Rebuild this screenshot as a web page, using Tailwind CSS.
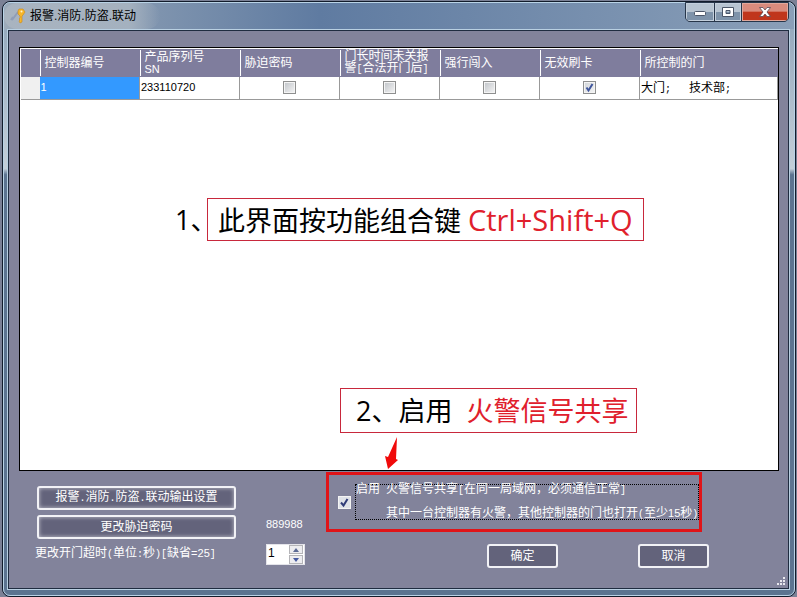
<!DOCTYPE html>
<html lang="zh-CN">
  <head>
    <meta charset="UTF-8" />
    <meta name="viewport" content="width=device-width, initial-scale=1.0" />
    <title>报警.消防.防盗.联动</title>
    <script src="https://cdn.jsdelivr.net/npm/@tailwindcss/browser@4"></script>
  </head>
  <body class="h-screen overflow-hidden bg-[#7b8196] pt-px pr-px pl-[2px] text-xs text-white font-['Liberation_Sans','Noto_Sans_CJK_SC',sans-serif]">
    <div class="h-full rounded-lg border border-[#121c2b] bg-[#5d7592]">
      <div class="flex h-full flex-col rounded-[7px] border border-[#b9d3e6] bg-linear-to-b from-[#8fa4b9] via-[#c3ced8] via-28% to-[#5c7490] to-29% pr-1 pb-[5px] pl-[3px]">
        <!-- Title bar -->
        <header class="-mr-1 -ml-[3px] flex h-[26px] shrink-0 items-start justify-between rounded-t-md bg-linear-to-r from-[#9dabba] via-[#5f7ba1] via-40% to-[#8a9fb8]">
          <div class="flex h-[26px] items-center gap-1 rounded-full bg-linear-to-r from-[#a9b4c0] via-[#a4b1bf] via-80% to-transparent pr-6 pl-[6px] text-black">
            <svg class="size-4" viewBox="0 0 16 16" fill="none">
              <path d="M8 4 2 12M3 9l-2 3" stroke="#8f9db8" stroke-width="2" />
              <path d="M9 1h4l2 3-2 3-1 1v6l-2 1-1-2 1-1-1-1 1-1V8L8 6V3z" fill="#f6b62b" stroke="#c98818" stroke-width=".6" />
              <circle cx="11.500" cy="3.500" r="1" fill="#fff3cf" />
            </svg>
            <h1 class="text-xs leading-4">报警.消防.防盗.联动</h1>
          </div>
          <div class="-mt-px mr-[5px] flex h-5 overflow-hidden rounded-b-[5px] border border-[#27364a] bg-[#27364a]">
            <button aria-label="最小化" class="grid w-7 place-items-center border border-[#c3cfdc] bg-linear-to-b from-[#b7c4d1] from-50% to-[#7e93aa] to-51%">
              <svg class="h-3 w-3" viewBox="0 0 12 12"><rect x=".5" y="5.500" width="11" height="4" rx="1" fill="#fff" stroke="#4b5668" /></svg>
            </button>
            <button aria-label="最大化" class="ml-px grid w-[26px] place-items-center border border-[#c3cfdc] bg-linear-to-b from-[#b7c4d1] from-50% to-[#7e93aa] to-51%">
              <svg class="h-3 w-3" viewBox="0 0 12 12"><path fill-rule="evenodd" d="M.5 1.500h11v9H.5zM4 4.500h4v3H4z" fill="#fff" stroke="#4b5668" /></svg>
            </button>
            <button aria-label="关闭" class="ml-px grid w-[46px] place-items-center border border-[#e0a89c] bg-linear-to-b from-[#d98b7d] from-45% to-[#c0351c] to-50%">
              <svg class="h-3 w-3" viewBox="0 0 12 12"><path d="M.5 1.500h3.500l2 2.500 2-2.500h3.500L8 6l3.500 4.500H8L6 8l-2 2.500H.5L4 6z" fill="#fff" stroke="#5a4a55" stroke-width=".8" /></svg>
            </button>
          </div>
        </header>

        <main class="min-h-0 flex-1 border border-[#b9d0e2]">
          <div class="relative flex h-full flex-col border border-[#1f2c40] bg-[#82839b] pt-4">
            <!-- Controller list -->
            <section class="relative mr-[9px] ml-[10px] min-h-0 flex-1 border border-black bg-white">
              <table class="w-full table-fixed border-collapse border-t border-white text-black">
                <thead>
                  <tr class="h-7 bg-[#7f7d9d] text-left leading-3 text-white">
                    <th class="w-[19px] border-l border-white"></th>
                    <th class="w-[100px] p-0 font-normal"><div class="flex h-[26px] items-center border-l border-white pl-1">控制器编号</div></th>
                    <th class="w-[100px] p-0 font-normal"><div class="flex h-[26px] items-center border-l border-white pl-1"><span>产品序列号<br /><span class="text-[11px]">SN</span></span></div></th>
                    <th class="w-[100px] p-0 font-normal"><div class="flex h-[26px] items-center border-l border-white pl-1">胁迫密码</div></th>
                    <th class="w-[100px] p-0 font-normal"><div class="flex h-[26px] items-center border-l border-white pl-1"><span class="whitespace-nowrap">门长时间未关报<br />警<span class="font-['Liberation_Mono',monospace] text-[10px]">[</span>合法开门后<span class="font-['Liberation_Mono',monospace] text-[10px]">]</span></span></div></th>
                    <th class="w-[100px] p-0 font-normal"><div class="flex h-[26px] items-center border-l border-white pl-1">强行闯入</div></th>
                    <th class="w-[100px] p-0 font-normal"><div class="flex h-[26px] items-center border-l border-white pl-1">无效刷卡</div></th>
                    <th class="p-0 font-normal"><div class="flex h-[26px] items-center border-l border-white pl-1">所控制的门</div></th>
                  </tr>
                </thead>
                <tbody>
                  <tr class="h-[23px] border-b border-[#999]">
                    <td class="border-l border-white bg-[#f0f0f0]"></td>
                    <td class="border-r border-[#999] bg-[#3399ff] px-px py-0 text-[11px] text-white">1</td>
                    <td class="border-r border-[#999] px-px py-0 text-[11px]">233110720</td>
                    <td class="border-r border-[#999] p-0">
                      <input type="checkbox" aria-label="胁迫密码" class="mx-auto block size-[13px] appearance-none border border-[#8e8f8f] bg-linear-to-br from-[#bfc3c8] to-[#f6f6f6] shadow-[inset_0_0_0_1px_#f4f4f4]" />
                    </td>
                    <td class="border-r border-[#999] p-0">
                      <input type="checkbox" aria-label="门长时间未关报警" class="mx-auto block size-[13px] appearance-none border border-[#8e8f8f] bg-linear-to-br from-[#bfc3c8] to-[#f6f6f6] shadow-[inset_0_0_0_1px_#f4f4f4]" />
                    </td>
                    <td class="border-r border-[#999] p-0">
                      <input type="checkbox" aria-label="强行闯入" class="mx-auto block size-[13px] appearance-none border border-[#8e8f8f] bg-linear-to-br from-[#bfc3c8] to-[#f6f6f6] shadow-[inset_0_0_0_1px_#f4f4f4]" />
                    </td>
                    <td class="border-r border-[#999] p-0">
                      <div class="mx-auto grid size-[13px]">
                        <input type="checkbox" checked aria-label="无效刷卡" class="peer col-start-1 row-start-1 size-[13px] appearance-none border border-[#8e8f8f] bg-linear-to-br from-[#cfd3d8] to-[#f6f6f6] shadow-[inset_0_0_0_1px_#f4f4f4]" />
                        <svg class="pointer-events-none invisible col-start-1 row-start-1 size-[13px] peer-checked:visible" viewBox="0 0 13 13" fill="none"><path d="M3.500 6.500 5.500 9.500 9.500 3" stroke="#40569c" stroke-width="2" /></svg>
                      </div>
                    </td>
                    <td class="border-r border-[#999] px-px py-0 whitespace-pre">大门<span class="font-['Liberation_Mono',monospace] text-[10px]">;   </span>技术部<span class="font-['Liberation_Mono',monospace] text-[10px]">;</span></td>
                  </tr>
                </tbody>
              </table>

              <!-- Step notes lie over the empty part of the list -->
              <div class="absolute top-[150px] left-[155px] flex items-center text-[27px] leading-[41px] whitespace-pre text-black font-['Open_Sans','Noto_Sans_CJK_SC',sans-serif]">
                <span class="w-8">1、</span>
                <p class="h-[43px] border border-[#c8283c] px-[10px]">此界面按功能组合键 <span class="text-[29px] text-[#e0202c]">Ctrl+Shift+Q</span></p>
              </div>
              <p class="absolute top-[340px] left-[320px] border border-[#c8283c] pr-2 pl-[15px] text-[27px] leading-[43px] whitespace-pre text-black font-['Open_Sans','Noto_Sans_CJK_SC',sans-serif]">2、启用  <span class="text-[#e0202c]">火警信号共享</span></p>
              <svg class="absolute top-[389px] left-[364px] h-8 w-4" viewBox="0 0 16 32"><path d="M13 0 12 22l2 1L4 32 1 19l3 1z" fill="#f00a0a" /></svg>
            </section>

            <!-- Settings -->
            <section class="flex h-[117px] shrink-0 pl-7">
              <div class="flex w-[229px] flex-col gap-[5px] pt-[15px]">
                <button class="h-6 w-[199px] rounded-[3px] border-2 border-[#f2f2f6] bg-[#63637b] leading-4 shadow-[inset_0_0_4px_#c5c5d0]">报警<span class="font-['Liberation_Mono',monospace] text-[10px]">.</span>消防<span class="font-['Liberation_Mono',monospace] text-[10px]">.</span>防盗<span class="font-['Liberation_Mono',monospace] text-[10px]">.</span>联动输出设置</button>
                <button class="h-6 w-[199px] rounded-[3px] border-2 border-[#f2f2f6] bg-[#63637b] leading-4 shadow-[inset_0_0_4px_#c5c5d0]">更改胁迫密码</button>
                <label for="timeout" class="-ml-[2px] pt-px leading-4 whitespace-nowrap">更改开门超时<span class="font-['Liberation_Mono',monospace] text-[10px]">(</span>单位<span class="font-['Liberation_Mono',monospace] text-[10px]">:</span>秒<span class="font-['Liberation_Mono',monospace] text-[10px]">)[</span>缺省<span class="text-[11px]">=25</span><span class="font-['Liberation_Mono',monospace] text-[10px]">]</span></label>
              </div>
              <div class="flex w-[60px] flex-col gap-3 pt-[45px]">
                <span class="text-[11px] leading-4">889988</span>
                <div class="flex h-[21px] w-[39px] border border-[#e4e4ea] bg-white">
                  <input id="timeout" type="text" value="1" class="w-[22px] bg-white pl-px pb-1 text-xs text-black outline-none" />
                  <div class="flex flex-col gap-px">
                    <button aria-label="增加" class="grid h-[9px] w-[14px] place-items-center border border-[#b4b4b8] bg-[#ededf0]"><svg class="h-1 w-[6px]" viewBox="0 0 6 4"><path d="M0 4 3 0l3 4z" fill="#5c6a94" /></svg></button>
                    <button aria-label="减少" class="grid h-[9px] w-[14px] place-items-center border border-[#b4b4b8] bg-[#ededf0]"><svg class="h-1 w-[6px]" viewBox="0 0 6 4"><path d="M0 0h6L3 4z" fill="#4559a0" /></svg></button>
                  </div>
                </div>
              </div>
              <div class="pt-px">
                <div class="flex h-[60px] w-[376px] items-center border-[3px] border-[#e01418] pl-[9px]">
                  <div class="grid size-[13px] shrink-0">
                    <input id="share" type="checkbox" checked class="peer col-start-1 row-start-1 size-[13px] appearance-none border border-[#f4f4f4] bg-[#dfe2e8]" />
                    <svg class="pointer-events-none invisible col-start-1 row-start-1 size-[13px] peer-checked:visible" viewBox="0 0 13 13" fill="none"><path d="M3 6.500 5.500 9.500 9.500 3" stroke="#303c78" stroke-width="2" /></svg>
                  </div>
                  <label for="share" class="ml-1 flex h-9 w-[345px] flex-col justify-center border border-dotted border-black leading-[23px] whitespace-pre">
                    <span>启用<span class="font-['Liberation_Mono',monospace] text-[10px]"> </span>火警信号共享<span class="font-['Liberation_Mono',monospace] text-[10px]">[</span>在同一局域网，必须通信正常<span class="font-['Liberation_Mono',monospace] text-[10px]">]</span></span>
                    <span class="pl-[30px]">其中一台控制器有火警，其他控制器的门也打开<span class="font-['Liberation_Mono',monospace] text-[10px]">(</span>至少<span class="text-[11px]">15</span>秒<span class="font-['Liberation_Mono',monospace] text-[10px]">)</span></span>
                  </label>
                </div>
                <div class="flex gap-20 pt-3 pl-[161px]">
                  <button class="h-6 w-[71px] rounded-[3px] border-2 border-[#f2f2f6] bg-[#63637b] leading-4">确定</button>
                  <button class="h-6 w-[71px] rounded-[3px] border-2 border-[#f2f2f6] bg-[#63637b] leading-4">取消</button>
                </div>
              </div>
            </section>

            <!-- Resize grip -->
            <svg class="absolute right-[2px] bottom-[2px] size-[9px]" viewBox="0 0 9 9" fill="#e8e8ee">
              <path d="M6 0h2v2H6zM3 3h2v2H3zM6 3h2v2H6zM0 6h2v2H0zM3 6h2v2H3zM6 6h2v2H6z" />
            </svg>
          </div>
        </main>
      </div>
    </div>
  </body>
</html>
